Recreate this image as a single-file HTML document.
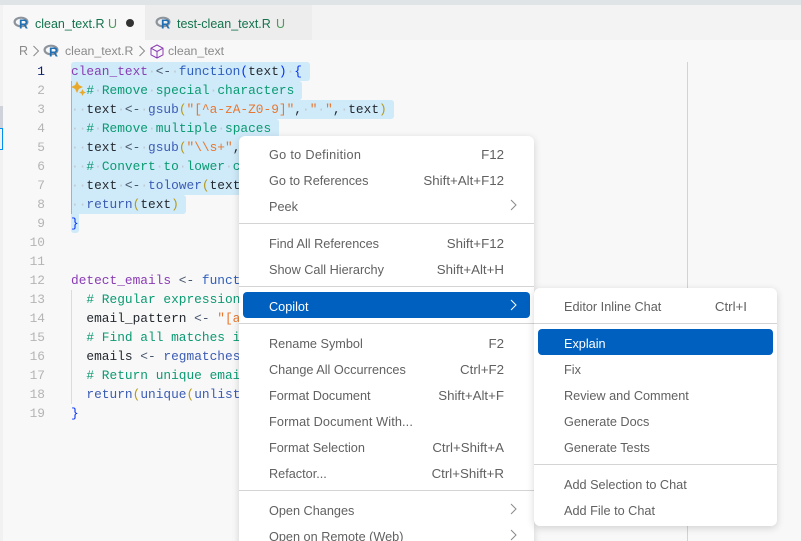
<!DOCTYPE html>
<html style="overflow:hidden;width:801px;height:541px"><head><meta charset="utf-8"><style>
html,body{margin:0;padding:0}
body{width:801px;height:541px;overflow:hidden;position:relative;background:#f8f8f8;font-family:"Liberation Sans",sans-serif}
#root{position:absolute;left:0;top:0;width:801px;height:541px;overflow:hidden;background:#f8f8f8}
.a{position:absolute}
.sel{position:absolute;left:71px;height:19px;background:#cfeaf9;border-radius:0 3px 3px 0}
.ln{position:absolute;left:20px;width:25px;text-align:right;font:12.83px/19px "Liberation Mono",monospace;color:#b4b4b4;height:19px}
.c{position:absolute;left:71px;font:12.83px/19px "Liberation Mono",monospace;white-space:pre;height:19px;color:#24292f}
.p{color:#8a3cb4}.o{color:#47566b}.f{color:#3c5cb4}.k{color:#2f5fbd}.g{color:#0b9a72}.s{color:#e8772e}.d{color:#bfc9cf}.b{color:#0431fa}.y{color:#b59a1a}
.menu{position:absolute;background:#fff;border-radius:6px;box-shadow:0 2px 8px rgba(0,0,0,.16)}
.i{position:absolute;font-size:12.7px;line-height:26px;height:26px;color:#616161;white-space:nowrap;margin-top:1px}
.r{position:absolute;font-size:13.3px;line-height:26px;height:26px;color:#616161;white-space:nowrap;text-align:right;margin-top:1px}
.sp{position:absolute;height:1px;background:#d4d4d4}
.hl{position:absolute;background:#0060c0;border-radius:4px;height:26px}
.w{color:#fff}
.t{position:absolute;font-size:12.5px;line-height:20px;white-space:nowrap}
</style></head><body><div id="root">
<div class="a" style="left:0;top:0;width:801px;height:5px;background:#dfe4e7"></div>
<div class="a" style="left:0;top:5px;width:801px;height:35px;background:#f3f3f3"></div>
<div class="a" style="left:3px;top:5px;width:142px;height:35px;background:#f8f8f8"></div>
<div class="a" style="left:145px;top:5px;width:167px;height:35px;background:#ededed"></div>
<div class="a" style="left:0;top:40px;width:3px;height:501px;background:#f1f1f1"></div>
<div class="a" style="left:0;top:106px;width:3px;height:22px;background:#cfd3d9"></div>
<div class="a" style="left:0;top:128px;height:20px;border:1px solid #0090f1;border-left:0;width:2px"></div>

<svg class="a" style="left:13px;top:15px" width="18" height="16" viewBox="0 0 18 16"><ellipse cx="8" cy="7" rx="6.4" ry="4.3" fill="none" stroke="#8d949c" stroke-width="2.2"/><text x="6" y="13.5" font-family="Liberation Sans" font-weight="700" font-size="12.5" fill="#1f6fb5">R</text></svg>
<div class="t" style="left:35px;top:14px;color:#14734d">clean_text.R</div>
<div class="t" style="left:108px;top:14px;color:#4f9a5c">U</div>
<div class="a" style="left:126px;top:19px;width:8px;height:8px;border-radius:50%;background:#333"></div>
<svg class="a" style="left:155px;top:15px" width="18" height="16" viewBox="0 0 18 16"><ellipse cx="8" cy="7" rx="6.4" ry="4.3" fill="none" stroke="#8d949c" stroke-width="2.2"/><text x="6" y="13.5" font-family="Liberation Sans" font-weight="700" font-size="12.5" fill="#1f6fb5">R</text></svg>
<div class="t" style="left:177px;top:14px;color:#14734d">test-clean_text.R</div>
<div class="t" style="left:276px;top:14px;color:#4f9a5c">U</div>

<div class="t" style="left:19px;top:41px;color:#8a8a8a">R</div>
<svg class="a" style="left:32px;top:45px" width="8" height="12"><path d="M1.5 1L6.5 6L1.5 11" fill="none" stroke="#8a8a8a"/></svg>
<svg class="a" style="left:43px;top:43px" width="18" height="16" viewBox="0 0 18 16"><ellipse cx="8" cy="7" rx="6.4" ry="4.3" fill="none" stroke="#8d949c" stroke-width="2.2"/><text x="6" y="13.5" font-family="Liberation Sans" font-weight="700" font-size="12.5" fill="#1f6fb5">R</text></svg>
<div class="t" style="left:65px;top:41px;color:#8a8a8a;font-size:12.3px">clean_text.R</div>
<svg class="a" style="left:138px;top:45px" width="8" height="12"><path d="M1.5 1L6.5 6L1.5 11" fill="none" stroke="#8a8a8a"/></svg>
<svg class="a" style="left:150px;top:44px" width="14" height="15" viewBox="0 0 14 15"><path d="M7 1L13 4.2V10.8L7 14L1 10.8V4.2ZM1 4.2L7 7.5L13 4.2M7 7.5V14" fill="none" stroke="#8a3cb4" stroke-width="1"/></svg>
<div class="t" style="left:168px;top:41px;color:#8a8a8a;font-size:12.3px">clean_text</div>

<div class="a" style="left:687px;top:62px;width:1px;height:479px;background:#d3d3d3"></div>

<div class="sel" style="top:62px;width:239px;border-radius:3px 3px 3px 0"></div>
<div class="sel" style="top:81px;width:231px"></div>
<div class="sel" style="top:100px;width:323px"></div>
<div class="sel" style="top:119px;width:208px"></div>
<div class="sel" style="top:138px;width:254px"></div>
<div class="sel" style="top:157px;width:200px"></div>
<div class="sel" style="top:176px;width:185px"></div>
<div class="sel" style="top:195px;width:115px"></div>
<div class="sel" style="top:214px;width:8px;border-radius:0 0 3px 3px"></div>
<div class="a" style="left:71px;top:81px;width:1px;height:133px;background:#9fb4c0"></div>
<div class="a" style="left:71px;top:290px;width:1px;height:114px;background:#dcdcdc"></div>

<div class="ln" style="top:62px;color:#0b216f">1</div>
<div class="ln" style="top:81px">2</div>
<div class="ln" style="top:100px">3</div>
<div class="ln" style="top:119px">4</div>
<div class="ln" style="top:138px">5</div>
<div class="ln" style="top:157px">6</div>
<div class="ln" style="top:176px">7</div>
<div class="ln" style="top:195px">8</div>
<div class="ln" style="top:214px">9</div>
<div class="ln" style="top:233px">10</div>
<div class="ln" style="top:252px">11</div>
<div class="ln" style="top:271px">12</div>
<div class="ln" style="top:290px">13</div>
<div class="ln" style="top:309px">14</div>
<div class="ln" style="top:328px">15</div>
<div class="ln" style="top:347px">16</div>
<div class="ln" style="top:366px">17</div>
<div class="ln" style="top:385px">18</div>
<div class="ln" style="top:404px">19</div>

<div class="c" style="top:62px"><span class="p">clean_text</span><span class="d">·</span><span class="o">&lt;-</span><span class="d">·</span><span class="k">function</span><span class="b">(</span>text<span class="b">)</span><span class="d">·</span><span class="b">{</span></div>
<div class="c" style="top:81px">  <span class="g">#</span><span class="d">·</span><span class="g">Remove</span><span class="d">·</span><span class="g">special</span><span class="d">·</span><span class="g">characters</span></div>
<div class="c" style="top:100px"><span class="d">··</span>text<span class="d">·</span><span class="o">&lt;-</span><span class="d">·</span><span class="f">gsub</span><span class="y">(</span><span class="s">"[^a-zA-Z0-9]"</span>,<span class="d">·</span><span class="s">"</span><span class="d">·</span><span class="s">"</span>,<span class="d">·</span>text<span class="y">)</span></div>
<div class="c" style="top:119px"><span class="d">··</span><span class="g">#</span><span class="d">·</span><span class="g">Remove</span><span class="d">·</span><span class="g">multiple</span><span class="d">·</span><span class="g">spaces</span></div>
<div class="c" style="top:138px"><span class="d">··</span>text<span class="d">·</span><span class="o">&lt;-</span><span class="d">·</span><span class="f">gsub</span><span class="y">(</span><span class="s">"\\s+"</span>,<span class="d">·</span><span class="s">"</span><span class="d">·</span><span class="s">"</span>,<span class="d">·</span>text<span class="y">)</span></div>
<div class="c" style="top:157px"><span class="d">··</span><span class="g">#</span><span class="d">·</span><span class="g">Convert</span><span class="d">·</span><span class="g">to</span><span class="d">·</span><span class="g">lower</span><span class="d">·</span><span class="g">case</span></div>
<div class="c" style="top:176px"><span class="d">··</span>text<span class="d">·</span><span class="o">&lt;-</span><span class="d">·</span><span class="f">tolower</span><span class="y">(</span>text<span class="y">)</span></div>
<div class="c" style="top:195px"><span class="d">··</span><span class="f">return</span><span class="y">(</span>text<span class="y">)</span></div>
<div class="c" style="top:214px"><span class="b">}</span></div>
<div class="c" style="top:271px"><span class="p">detect_emails</span> <span class="o">&lt;-</span> <span class="k">function</span><span class="b">(</span>text<span class="b">)</span> <span class="b">{</span></div>
<div class="c" style="top:290px">  <span class="g"># Regular expression for emails</span></div>
<div class="c" style="top:309px">  email_pattern <span class="o">&lt;-</span> <span class="s">"[a-zA-Z0-9._%+-]+"</span></div>
<div class="c" style="top:328px">  <span class="g"># Find all matches in text</span></div>
<div class="c" style="top:347px">  emails <span class="o">&lt;-</span> <span class="f">regmatches</span><span class="y">(</span>text<span class="y">)</span></div>
<div class="c" style="top:366px">  <span class="g"># Return unique emails</span></div>
<div class="c" style="top:385px">  <span class="f">return</span><span class="y">(</span><span class="f">unique</span><span class="y">(</span><span class="f">unlist</span><span class="y">(</span>emails<span class="y">)))</span></div>
<div class="c" style="top:404px"><span class="b">}</span></div>

<svg class="a" style="left:71px;top:81px" width="16" height="16" viewBox="0 0 16 16"><path d="M6 1L7.6 4.4L11 6L7.6 7.6L6 11L4.4 7.6L1 6L4.4 4.4Z" fill="#e8a92a" stroke="#e8a92a" stroke-width=".8"/><path d="M11.5 8.5L12.4 10.6L14.5 11.5L12.4 12.4L11.5 14.5L10.6 12.4L8.5 11.5L10.6 10.6Z" fill="#e8a92a" stroke="#e8a92a" stroke-width=".5"/></svg>

<div class="menu" style="left:239px;top:136px;width:295px;height:420px"></div>
<div class="i" style="left:269px;top:141px;letter-spacing:.3px">Go to Definition</div><div class="r" style="right:297px;top:141px">F12</div>
<div class="i" style="left:269px;top:167px">Go to References</div><div class="r" style="right:297px;top:167px">Shift+Alt+F12</div>
<div class="i" style="left:269px;top:193px">Peek</div>
<svg class="a" style="left:510px;top:199px" width="8" height="12"><path d="M1 1L6 6L1 11" fill="none" stroke="#8a8a8a"/></svg>
<div class="sp" style="left:239px;top:223px;width:295px"></div>
<div class="i" style="left:269px;top:230px">Find All References</div><div class="r" style="right:297px;top:230px">Shift+F12</div>
<div class="i" style="left:269px;top:256px">Show Call Hierarchy</div><div class="r" style="right:297px;top:256px">Shift+Alt+H</div>
<div class="sp" style="left:239px;top:286px;width:295px"></div>
<div class="hl" style="left:243px;top:292px;width:287px"></div>
<div class="i w" style="left:269px;top:293px">Copilot</div>
<svg class="a" style="left:510px;top:299px" width="8" height="12"><path d="M1 1L6 6L1 11" fill="none" stroke="#fff"/></svg>
<div class="sp" style="left:239px;top:323px;width:295px"></div>
<div class="i" style="left:269px;top:330px">Rename Symbol</div><div class="r" style="right:297px;top:330px">F2</div>
<div class="i" style="left:269px;top:356px">Change All Occurrences</div><div class="r" style="right:297px;top:356px">Ctrl+F2</div>
<div class="i" style="left:269px;top:382px">Format Document</div><div class="r" style="right:297px;top:382px">Shift+Alt+F</div>
<div class="i" style="left:269px;top:408px;letter-spacing:.13px">Format Document With...</div>
<div class="i" style="left:269px;top:434px">Format Selection</div><div class="r" style="right:297px;top:434px">Ctrl+Shift+A</div>
<div class="i" style="left:269px;top:460px">Refactor...</div><div class="r" style="right:297px;top:460px">Ctrl+Shift+R</div>
<div class="sp" style="left:239px;top:490px;width:295px"></div>
<div class="i" style="left:269px;top:497px">Open Changes</div>
<svg class="a" style="left:510px;top:503px" width="8" height="12"><path d="M1 1L6 6L1 11" fill="none" stroke="#8a8a8a"/></svg>
<div class="i" style="left:269px;top:523px">Open on Remote (Web)</div>
<svg class="a" style="left:510px;top:529px" width="8" height="12"><path d="M1 1L6 6L1 11" fill="none" stroke="#8a8a8a"/></svg>

<div class="menu" style="left:534px;top:288px;width:243px;height:238px"></div>
<div class="i" style="left:564px;top:293px">Editor Inline Chat</div><div class="r" style="right:54px;top:293px">Ctrl+I</div>
<div class="sp" style="left:534px;top:323px;width:243px"></div>
<div class="hl" style="left:538px;top:329px;width:235px"></div>
<div class="i w" style="left:564px;top:330px">Explain</div>
<div class="i" style="left:564px;top:356px">Fix</div>
<div class="i" style="left:564px;top:382px">Review and Comment</div>
<div class="i" style="left:564px;top:408px">Generate Docs</div>
<div class="i" style="left:564px;top:434px">Generate Tests</div>
<div class="sp" style="left:534px;top:464px;width:243px"></div>
<div class="i" style="left:564px;top:471px">Add Selection to Chat</div>
<div class="i" style="left:564px;top:497px">Add File to Chat</div>
</div></body></html>
